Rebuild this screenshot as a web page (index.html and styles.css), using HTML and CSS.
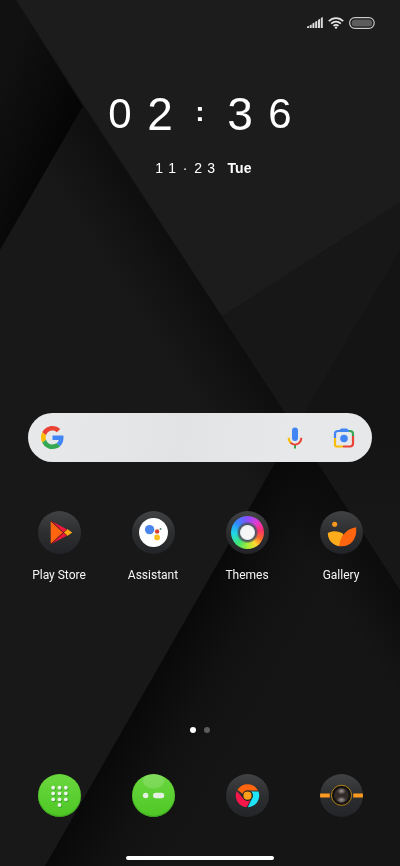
FILE: index.html
```html
<!DOCTYPE html>
<html lang="en">
<head>
	<meta charset="utf-8" />
	<meta name="viewport" content="width=device-width, initial-scale=1" />
	<title>Home</title>
	<link rel="stylesheet" href="styles.css">
</head>
<body>
<svg class="wallpaper" viewBox="0 0 400 866" preserveAspectRatio="none" aria-hidden="true">
	<defs>
		<linearGradient id="wpLeft" gradientUnits="userSpaceOnUse" x1="0" y1="90" x2="80" y2="120">
			<stop offset="0" stop-color="#111" /><stop offset="1" stop-color="#040404" />
		</linearGradient>
		<linearGradient id="wpFold" gradientUnits="userSpaceOnUse" x1="150" y1="205" x2="92" y2="243">
			<stop offset="0" stop-color="#0e0e0e" /><stop offset="0.4" stop-color="#121212" /><stop offset="1" stop-color="#181818" />
		</linearGradient>
		<linearGradient id="wpSide" x1="0" y1="0" x2="0" y2="1">
			<stop offset="0" stop-color="#141414" /><stop offset="0.5" stop-color="#141414" /><stop offset="0.8" stop-color="#171717" />
		</linearGradient>
		<linearGradient id="wpPeak" gradientUnits="userSpaceOnUse" x1="160" y1="665" x2="250" y2="716">
			<stop offset="0" stop-color="#090909" /><stop offset="0.5" stop-color="#111" /><stop offset="1" stop-color="#151515" />
		</linearGradient>
		<linearGradient id="wpPeakRight" gradientUnits="userSpaceOnUse" x1="359" y1="526" x2="309" y2="559">
			<stop offset="0" stop-color="#080808" stop-opacity="0.7" /><stop offset="1" stop-color="#080808" stop-opacity="0" />
		</linearGradient>
	</defs>
	<rect width="400" height="866" fill="#171717" />
	<path d="M83 105 295 428 45 866H0V250z" fill="url(#wpFold)" />
	<path d="M0 0H16L83 106 0 250z" fill="url(#wpLeft)" />
	<path d="M16 0H400V202L222 316z" fill="#1c1c1c" />
	<path d="M400 250V590L295 428z" fill="url(#wpSide)" />
	<path d="M295 428 400 590V866H45z" fill="url(#wpPeak)" />
	<path d="M295 428 400 590V866H45z" fill="url(#wpPeakRight)" />
</svg>

<div class="screen">
	<header class="status">
		<svg width="16" height="12" viewBox="0 0 16 12" role="img" aria-label="Signal">
			<path d="M0 9.500 2 9v2H0zM2.700 8.200l2-.8V11h-2zM5.400 6.500l2-1V11h-2zM8.200 4.700l2-1V11h-2zM11 3l2-1.200V11h-2zM13.800 1 15.800 0v11h-2z" fill="#dcdcdc" />
		</svg>
		<svg width="16" height="12" viewBox="0 0 16 12" role="img" aria-label="Wi-Fi">
			<g fill="none" stroke="#e4e4e4" stroke-width="1.700">
				<path d="M.8 4.200c4-4.200 10.400-4.200 14.400 0" /><path d="M3.200 6.700c2.700-2.800 6.900-2.800 9.600 0" /><path d="M5.500 9c1.400-1.500 3.600-1.500 5 0" />
			</g>
			<circle cx="8" cy="10.600" r="1.200" fill="#e4e4e4" />
		</svg>
		<svg width="26" height="12" viewBox="0 0 26 12" role="img" aria-label="Battery">
			<rect x=".6" y=".6" width="24.600" height="10.800" rx="5.400" fill="#151515" stroke="#ccc" stroke-width="1.200" />
			<rect x="2.500" y="2.500" width="20.800" height="7" rx="3.500" fill="#5d5d5d" />
		</svg>
	</header>

	<main>
		<section class="clock">
			<div class="time"><span>0</span><span class="big">2</span><span class="colon">:</span><span class="big">3</span><span>6</span></div>
			<div class="date">
				<div class="digits"><span>1</span><span>1</span><span>·</span><span>2</span><span>3</span></div>
				<b>Tue</b>
			</div>
		</section>

		<form class="search" role="search">
			<svg width="23" height="23" viewBox="0 0 48 48" aria-hidden="true">
				<path fill="#ea4335" d="M24 9.500c3.540 0 6.710 1.220 9.210 3.600l6.850-6.850C35.900 2.380 30.470 0 24 0 14.620 0 6.510 5.380 2.560 13.220l7.980 6.190C12.430 13.720 17.740 9.500 24 9.500z" />
				<path fill="#4285f4" d="M46.980 24.550c0-1.570-.15-3.090-.38-4.550H24v9.020h12.940c-.58 2.960-2.260 5.480-4.780 7.180l7.730 6c4.510-4.180 7.090-10.360 7.090-17.650z" />
				<path fill="#fbbc05" d="M10.530 28.590A14.500 14.500 0 0 1 9.770 24c0-1.600.27-3.140.76-4.590l-7.980-6.190A23.900 23.900 0 0 0 0 24c0 3.880.92 7.540 2.560 10.780z" />
				<path fill="#34a853" d="M24 48c6.480 0 11.930-2.130 15.890-5.810l-7.730-6c-2.150 1.450-4.920 2.300-8.160 2.300-6.260 0-11.570-4.220-13.470-9.910l-7.980 6.190C6.510 42.620 14.620 48 24 48z" />
			</svg>
			<input class="query" type="text" aria-label="Search" />
			<button type="button" aria-label="Voice search">
				<svg width="24" height="24" viewBox="0 0 24 24">
					<rect x="9" y="1.500" width="6" height="13.500" rx="3" fill="#4285f4" />
					<path d="M12 18.500V22.500" stroke="#34a853" stroke-width="2" />
					<path d="M5.700 11.800c0 2.600 1 4.300 2.500 5.400" fill="none" stroke="#fbbc05" stroke-width="2" />
					<path d="M7.600 16.800c2.600 2.300 6.200 2.300 8.800 0 1.300-1.200 1.900-2.900 1.900-5" fill="none" stroke="#ea4335" stroke-width="2" />
				</svg>
			</button>
			<button type="button" aria-label="Search by image">
				<svg width="24" height="24" viewBox="0 0 24 24">
					<g fill="none" stroke-width="2.200">
						<path d="M3 12V8A3 3 0 0 1 6 5H17" stroke="#4285f4" />
						<path d="M17 5h1a3 3 0 0 1 3 3V10" stroke="#34a853" />
						<path d="M21 10v7.500a3 3 0 0 1-3 3H11" stroke="#ea4335" />
						<path d="M11 20.500H5a2 2 0 0 1-2-2V12" stroke="#fbbc05" />
					</g>
					<path d="M6.500 5 9 2.500h6l2.500 2.500z" fill="#4285f4" />
					<circle cx="12" cy="12.500" r="3.800" fill="#4285f4" />
				</svg>
			</button>
		</form>

		<nav class="apps" aria-label="Apps">
			<a href="#">
				<span class="icon"><svg viewBox="0 0 44 44" aria-hidden="true">
					<path d="M13 10 30 19 26 22.500z" fill="#f0183f" /><path d="M13 34 30 25 26 21z" fill="#e8183c" />
					<path d="M13 10.500 25.500 22 13 33.500z" fill="#ff650e" />
					<path d="M26 22 30 18.500 35 22 30 25.500z" fill="#ffa514" />
					<path d="M13 10 30 25.500M13 34 30 18.500" stroke="#571515" stroke-width=".8" />
				</svg></span>
				Play Store
			</a>
			<a href="#">
				<span class="icon"><svg viewBox="0 0 44 44" aria-hidden="true">
					<circle cx="22" cy="22" r="14.800" fill="#fff" />
					<circle cx="18" cy="19" r="4.800" fill="#4b86ec" />
					<circle cx="25.700" cy="21" r="2.300" fill="#dd4436" />
					<circle cx="25.700" cy="27" r="2.900" fill="#fbbc1f" />
					<circle cx="29.200" cy="18.500" r="1" fill="#4b8a70" />
				</svg></span>
				Assistant
			</a>
			<a href="#">
				<span class="icon"><span class="wheel"></span></span>
				Themes
			</a>
			<a href="#">
				<span class="icon"><svg viewBox="0 0 44 44" aria-hidden="true">
					<circle cx="15" cy="13.500" r="2.600" fill="#f9981d" />
					<path d="M8 22.500c5-2.500 11-2.300 16 1L20 36C13 35 8 30 8 22.500z" fill="#ffac1c" />
					<path d="M37 16.500C28 18 21 24 19.500 35.800 29 38 38.500 30 37 16.500z" fill="#ff650e" />
				</svg></span>
				Gallery
			</a>
		</nav>
	</main>

	<footer>
		<div class="pages"><span class="dot current"></span><span class="dot"></span></div>
		<nav class="dock" aria-label="Dock">
			<a href="#" aria-label="Phone"><span class="icon green"><svg viewBox="0 0 44 44" aria-hidden="true">
				<g fill="#2f9a1e" transform="translate(.5 .8)">
					<circle cx="15.500" cy="14" r="2.100" /><circle cx="22" cy="14" r="2.100" /><circle cx="28.500" cy="14" r="2.100" />
					<circle cx="15.500" cy="20" r="2.100" /><circle cx="22" cy="20" r="2.100" /><circle cx="28.500" cy="20" r="2.100" />
					<circle cx="15.500" cy="26" r="2.100" /><circle cx="22" cy="26" r="2.100" /><circle cx="28.500" cy="26" r="2.100" />
					<circle cx="22" cy="31.700" r="2.100" />
				</g>
				<g fill="#e9f3e6">
					<circle cx="15.500" cy="14" r="2" /><circle cx="22" cy="14" r="2" /><circle cx="28.500" cy="14" r="2" />
					<circle cx="15.500" cy="20" r="2" /><circle cx="22" cy="20" r="2" /><circle cx="28.500" cy="20" r="2" />
					<circle cx="15.500" cy="26" r="2" /><circle cx="22" cy="26" r="2" /><circle cx="28.500" cy="26" r="2" />
					<circle cx="22" cy="31.700" r="2" />
				</g>
			</svg></span></a>
			<a href="#" aria-label="Messages"><span class="icon green"><svg viewBox="0 0 44 44" aria-hidden="true">
				<ellipse cx="22" cy="7" rx="11" ry="8" fill="#fff" opacity=".15" />
				<circle cx="14" cy="22" r="2.800" fill="#e6efe3" />
				<rect x="21.500" y="19.300" width="11.500" height="5.600" rx="2.800" fill="#e6efe3" />
			</svg></span></a>
			<a href="#" aria-label="Browser"><span class="icon"><svg viewBox="0 0 44 44" aria-hidden="true">
				<path d="M11.700 16.200A12 12 0 0 1 32.700 17H22a5 5 0 0 0-4.700 3.400z" fill="#ff650e" />
				<path d="M10.900 17.500A12 12 0 0 0 21 34l4-7.500a5 5 0 0 1-7.600-2z" fill="#f5174a" />
				<path d="M33.300 18A12 12 0 0 1 22.300 34l4.300-9a5 5 0 0 0-1-7z" fill="#1fe3f7" />
				<circle cx="22" cy="22.200" r="5.200" fill="#2b1d18" />
				<circle cx="22" cy="22.200" r="4.200" fill="#ffa01c" />
			</svg></span></a>
			<a href="#" aria-label="Camera"><span class="icon"><svg viewBox="0 0 44 44" aria-hidden="true">
				<defs><radialGradient id="lens"><stop offset="0" stop-color="#a59a98" /><stop offset="1" stop-color="#a59a98" stop-opacity="0" /></radialGradient></defs>
				<path d="M0 20h10v4H0zM34 20h10v4H34z" fill="#fd9a20" />
				<circle cx="22" cy="21.800" r="10.300" fill="#141010" stroke="#b5871c" stroke-width="1" />
				<circle cx="22" cy="21.800" r="7.500" fill="#302a29" />
				<ellipse cx="22" cy="17.500" rx="4.500" ry="3.500" fill="url(#lens)" />
				<ellipse cx="22" cy="26.500" rx="5" ry="3.500" fill="url(#lens)" />
			</svg></span></a>
		</nav>
		<div class="homebar"></div>
	</footer>
</div>
</body>
</html>
```
FILE: styles.css
```css
*{
	box-sizing: border-box;
}
body{
	margin: 0;
	background-color: #171717;
	color: #fff;
	font-family: Roboto, "Liberation Sans", sans-serif;
	font-size: 12px;
}
svg{
	display: block;
}
/* background */
.wallpaper{
	position: fixed;
	top: 0;
	left: 0;
	width: 100%;
	height: 100%;
	z-index: -1;
}
.screen{
	display: flex;
	flex-direction: column;
	min-height: 100vh;
}
.status{
	display: flex;
	justify-content: flex-end;
	gap: 5px;
	padding: 17px 25px 0 0;
}
/* clock */
.clock{
	display: flex;
	flex-direction: column;
	align-items: center;
	gap: 20px;
	margin-top: 61px;
	font-family: "Liberation Sans", Arial, sans-serif;
}
.time{
	display: grid;
	grid-template-columns: repeat(5, 40px);
	font-size: 42px;
	line-height: 48px;
	text-align: center;
}
.time .big{
	font-size: 46px;
}
.time .colon{
	font-size: 28px;
	font-weight: bold;
	line-height: 44px;
}
.date{
	display: flex;
	gap: 10px;
	padding-left: 4px;
	font-size: 14px;
	line-height: 20px;
}
.digits{
	display: grid;
	grid-template-columns: repeat(5, 13px);
	text-align: center;
}
/* search bar */
.search{
	display: flex;
	align-items: center;
	height: 49px;
	margin: 235px 28px 0;
	padding: 0 16px 0 13px;
	border-radius: 25px;
	background: linear-gradient(100deg, #e8e9ea, #e2e3e4 45%, #e7e8e9 75%);
}
.query{
	flex: 1;
	min-width: 0;
	height: 40px;
	border: none;
	outline: none;
	background: none;
	font-size: 16px;
}
.search button{
	padding: 0;
	border: none;
	background: none;
}
.search button + button{
	margin-left: 25px;
}
/* app icons */
.apps, .dock{
	display: grid;
	grid-template-columns: repeat(4, 1fr);
	padding: 0 12px;
}
.apps{
	margin-top: 49px;
}
.apps a, .dock a{
	display: flex;
	flex-direction: column;
	align-items: center;
	gap: 13px;
	color: #f4f4f4;
	line-height: 16px;
	text-decoration: none;
}
.icon{
	display: flex;
	align-items: center;
	justify-content: center;
	width: 43px;
	height: 43px;
	border-radius: 50%;
	background: linear-gradient(#414243, #2d2e2f 50%, #232428);
}
.icon svg{
	width: 43px;
	height: 43px;
	border-radius: 50%;
}
.icon.green{
	background: linear-gradient(#6bd63f, #5cd032 50%, #4dc724);
	box-shadow: inset 0 -1px 1px #3c9e20;
}
.wheel{
	width: 33px;
	height: 33px;
	border-radius: 50%;
	background: radial-gradient(circle closest-side, #f6f6f6 6px, #e4e8e8 7px, #4b5260 8px, rgba(75, 82, 96, 0.8) 9px, rgba(75, 82, 96, 0) 11px),
		conic-gradient(#8a4dff, #e23bd0 45deg, #ff2f6d 80deg, #ff6a2a 115deg, #ffd92e 145deg, #a6ec35 180deg, #3fe374 220deg, #1fd9e6 265deg, #2d8dff 310deg, #8a4dff);
}
/* bottom */
footer{
	margin-top: auto;
	padding-bottom: 6px;
}
.pages{
	display: flex;
	justify-content: center;
	gap: 8px;
	margin-bottom: 41px;
}
.dot{
	width: 6px;
	height: 6px;
	border-radius: 50%;
	background-color: #5c5c5c;
}
.dot.current{
	background-color: #fff;
}
.homebar{
	width: 37%;
	height: 4px;
	margin: 39px auto 0;
	border-radius: 2px;
	background-color: #fff;
}
```
